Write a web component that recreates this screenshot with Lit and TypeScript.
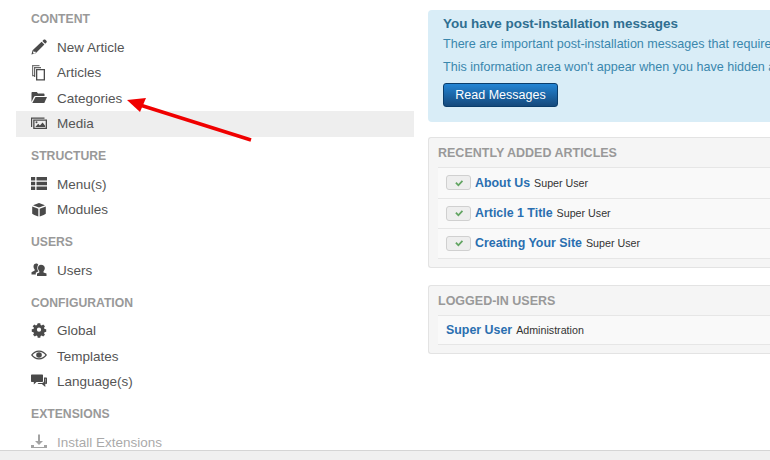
import { LitElement, html, css, svg } from "lit";
import { customElement } from "lit/decorators.js";

const ICONS: Record<string, unknown> = {
  pencil: svg`<path fill-rule="evenodd" d="M12.600.8c.5-.5 1.300-.5 1.800 0l1 1c.5.5.5 1.300 0 1.800l-1.200 1.200-2.800-2.800zM10.600 2.800l2.800 2.800-8.700 8.700-4.300 1.200 1.200-4.300zM2.800 11.300l-.8 2.800.9.9 1.900-.6-.2-1.600-1.700-.1z"/>`,
  copies: svg`<path d="M1 0h7.500v1.200H2.200V10H4v1.200H1z" opacity=".75"/><path d="M3 2h7v1.200H4.200V12H3z" opacity=".85"/><path fill-rule="evenodd" d="M5 4h9v11.500H5zM6.300 5.300v8.900h6.400V5.300z"/>`,
  folder: svg`<path d="M.5 3c0-.6.4-1 1-1h4.300l1.200 1.500h5.500c.6 0 1 .4 1 1V6H4.500c-.8 0-1.300.4-1.600 1L.5 12z"/><path d="M4.500 7H16l-2.700 6H1.300z"/>`,
  image: svg`<path d="M0 1.500h13.500v1.200H1.200v8.300H0z"/><path fill-rule="evenodd" d="M2.200 3.500H16V13H2.200zM3.500 4.700v7.100h11.200V4.700z"/><path d="M4.300 11l2.900-3.200 1.700 1.700 2.700-3 2.500 3.200V11z"/><circle cx="5.500" cy="6.300" r="1"/>`,
  menu: svg`<path d="M0 1h4.200v3.400H0zM5.500 1H16v3.400H5.500zM0 5.800h4.200v3.400H0zM5.500 5.800H16v3.400H5.500zM0 10.600h4.200V14H0zM5.500 10.600H16V14H5.500z"/>`,
  cube: svg`<path d="M8 1l6 2.200L8 5.500 2 3.200zM1.200 4.500L7.300 6.800v7.700L3.300 13l-2.100-1.200zM14.800 4.500L8.700 6.800v7.700l4-1.500 2.100-1.200z"/>`,
  users: svg`<path d="M5.300 1.500c-1.700 0-2.800 1.300-2.800 3 0 1.200.5 2.200 1.200 2.900v1.200L.5 10.200v2.300h4.300v-1.700l2.700-1.500c-.7-.9-1.200-2-1.200-3.400 0-1.300.3-2.300 1-3.100-.5-.9-1.300-1.300-2-1.300z"/><path d="M10 2.800c-1.900 0-3 1.400-3 3.300 0 1.300.6 2.400 1.300 3.100v1.200L6 11.600V14h9.500v-2.400l-3-1.200V9.200c.8-.7 1.300-1.800 1.300-3.100 0-1.900-1.500-3.300-3.800-3.300z"/>`,
  gear: svg`<path fill-rule="evenodd" d="M6.500 0h3l.4 2 1.300.6 1.700-1.100 2.100 2.100-1.100 1.700.6 1.300 2 .4v3l-2 .4-.6 1.300 1.100 1.700-2.100 2.100-1.700-1.100-1.300.6-.4 2h-3l-.4-2-1.300-.6-1.700 1.100-2.100-2.100 1.100-1.700-.6-1.300-2-.4v-3l2-.4.6-1.300L.5 3.600l2.100-2.100 1.700 1.100L5.600 2zM8 5a2.500 2.500 0 1 0 0 5 2.500 2.500 0 0 0 0-5z" transform="translate(1.200 .3) scale(.85)"/>`,
  eye: svg`<path fill-rule="evenodd" d="M8 2.500c3.300 0 6.300 1.800 8 4.500-1.700 2.700-4.700 4.500-8 4.500S1.700 9.700 0 7c1.700-2.700 4.700-4.500 8-4.500zM8 3.800C5.400 3.800 3 5.100 1.600 7 3 8.900 5.400 10.200 8 10.200s5-1.300 6.400-3.200C13 5.100 10.600 3.800 8 3.800zM8 4.200a2.800 2.800 0 1 1 0 5.600 2.800 2.800 0 0 1 0-5.600z"/>`,
  comments: svg`<path d="M1 .5h10c.6 0 1 .4 1 1V7c0 .6-.4 1-1 1H5.500L2.800 10.500V8H1c-.6 0-1-.4-1-1V1.500c0-.6.4-1 1-1z"/><path fill-rule="evenodd" d="M13 3.500h2c.6 0 1 .4 1 1V9c0 .6-.4 1-1 1h-.7v3l-3.400-3H6.500l1-1H11c1 0 2-.8 2-2zM14.500 4.800H14v5.500l-.2.700.2.100z"/>`,
  install: svg`<path d="M7 .5h2v6.500h3l-4 4-4-4h3z"/><path d="M0 11h3v2h10v-2h3v3H0z"/>`,
};

const SECTIONS = [
  { title: "CONTENT", items: [["pencil", "New Article"], ["copies", "Articles"], ["folder", "Categories"], ["image", "Media", "on"]] },
  { title: "STRUCTURE", items: [["menu", "Menu(s)"], ["cube", "Modules"]] },
  { title: "USERS", items: [["users", "Users"]] },
  { title: "CONFIGURATION", items: [["gear", "Global"], ["eye", "Templates"], ["comments", "Language(s)"]] },
  { title: "EXTENSIONS", items: [["install", "Install Extensions", "dim"]] },
];

const ARTICLES = [
  ["About Us", "Super User"],
  ["Article 1 Title", "Super User"],
  ["Creating Your Site", "Super User"],
];

@customElement("app-root")
export class AppRoot extends LitElement {
  static styles = css`
    :host {
      display: flex;
      flex-direction: column;
      position: relative;
      width: 770px;
      height: 460px;
      overflow: hidden;
      background: #fff;
      font-family: "Liberation Sans", Arial, sans-serif;
      color: #333;
    }
    .page { flex: 1; min-height: 0; display: flex; overflow: hidden; padding-left: 16px; gap: 14px; }
    .side { width: 398px; flex: none; padding-top: 9px; }
    .section + .section { margin-top: 9.5px; }
    .head {
      height: 20px; line-height: 20px; margin: 0 0 5.3px; padding-left: 15px;
      font-size: 12.2px; font-weight: 700; color: #999;
    }
    .item {
      display: flex; align-items: center; height: 25.6px; padding-left: 15px;
      font-size: 13.5px; color: #555;
    }
    .item.on { background: #eee; }
    .item.dim { opacity: .5; }
    .item svg { width: 16px; height: 16px; fill: #4a4a4a; flex: none; margin-right: 10px; }
    .main { flex: 1; min-width: 0; padding-top: 10px; }
    .alert {
      width: 342px; height: 112px; box-sizing: border-box; padding: 6px 0 0 15px;
      background: #d9edf7; border-radius: 4px 0 0 4px; color: #3a87ad; font-size: 12.55px;
      white-space: nowrap; overflow: hidden;
    }
    .alert h4 { margin: 0 0 6px; font-size: 13.45px; line-height: 15px; font-weight: 700; color: #2f6f91; }
    .alert p { margin: 0 0 8px; line-height: 15px; }
    .btn {
      display: inline-block; width: 115px; height: 24px; line-height: 22px; text-align: center;
      box-sizing: border-box; border: 1px solid #0a3d6b; border-radius: 3px; color: #fff; font-size: 12.5px;
      background: linear-gradient(#2384d3, #15497c);
    }
    .well {
      width: 342px; box-sizing: border-box; margin-top: 15px; padding: 0 0 8px 9px;
      background: #f5f5f5; border: 1px solid #e3e3e3; border-right: 0; border-radius: 3px 0 0 3px;
    }
    .well + .well { margin-top: 17px; }
    .well h2 {
      margin: 0; height: 29px; line-height: 30px; font-size: 12.5px; font-weight: 700; color: #999;
    }
    .row {
      display: flex; align-items: center; height: 30.5px; box-sizing: border-box; padding-left: 8px;
      background: #f9f9f9; border-top: 1px solid #e6e6e6; font-size: 10.7px; color: #333;
    }
    .row:last-child { border-bottom: 1px solid #e6e6e6; }
    .row b { color: #2a6fb0; font-size: 12.4px; margin-right: 4px; }
    .check {
      display: flex; align-items: center; justify-content: center; width: 25px; height: 15px; margin-right: 4px;
      background: #eee; border: 1px solid #d0d0d0; border-radius: 3px; box-sizing: border-box;
    }
    .check svg { width: 10px; height: 10px; fill: #62a562; }
    .foot { height: 10px; flex: none; box-sizing: border-box; background: #f0f0f0; border-top: 1px solid #d5d5d5; }
    .arrow { position: absolute; left: 0; top: 0; width: 770px; height: 460px; pointer-events: none; }
  `;

  render() {
    return html`
      <div class="page">
        <nav class="side">
          ${SECTIONS.map((s) => html`
            <div class="section">
              <div class="head">${s.title}</div>
              ${s.items.map((i) => html`
                <div class="item ${i[2] ?? ""}">
                  <svg viewBox="0 0 16 16">${ICONS[i[0]]}</svg>${i[1]}
                </div>`)}
            </div>`)}
        </nav>
        <main class="main">
          <div class="alert">
            <h4>You have post-installation messages</h4>
            <p>There are important post-installation messages that require your attention.</p>
            <p>This information area won't appear when you have hidden all the messages.</p>
            <span class="btn">Read Messages</span>
          </div>
          <section class="well">
            <h2>RECENTLY ADDED ARTICLES</h2>
            ${ARTICLES.map((a) => html`
              <div class="row">
                <span class="check"><svg viewBox="0 0 16 16"><path d="M2 8.500l2-2 3 3 5.500-6 2 2-7.500 8z"/></svg></span>
                <b>${a[0]}</b>${a[1]}
              </div>`)}
          </section>
          <section class="well">
            <h2>LOGGED-IN USERS</h2>
            <div class="row"><b>Super User</b>Administration</div>
          </section>
        </main>
      </div>
      <div class="foot"></div>
      <svg class="arrow" viewBox="0 0 770 460">
        <path d="M251 140L140 105" stroke="#f00000" stroke-width="3.500" fill="none"/>
        <path d="M127 100L146 98L140 112z" fill="#f00000"/>
      </svg>
    `;
  }
}
